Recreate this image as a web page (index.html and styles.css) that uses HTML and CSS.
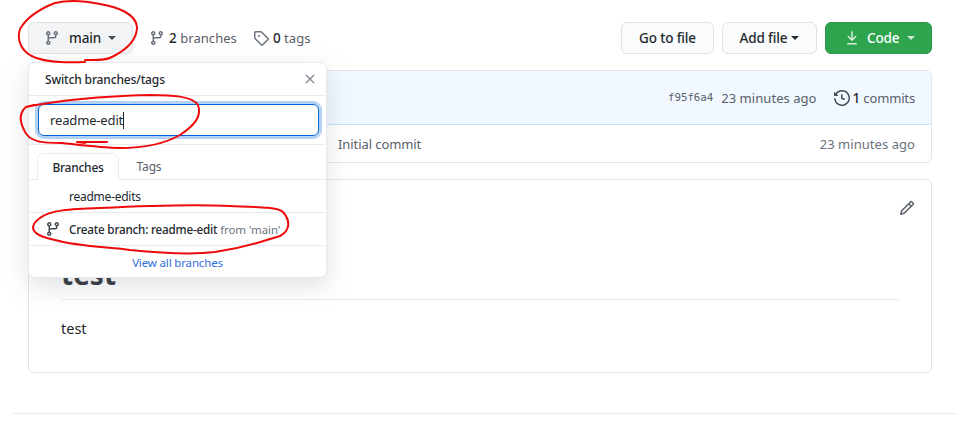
FILE: index.html
```html
<!DOCTYPE html>
<html lang="en">
<head>
<meta charset="utf-8">
<title>Repository</title>
<link rel="stylesheet" href="styles.css">
</head>
<body>
<main class="repo">
  <div class="toolbar">
    <div class="branch-wrap">
      <button class="btn btn-branch">
        <svg class="ico" viewBox="0 0 16 16"><path d="M11.75 2.5a.75.75 0 100 1.5.75.75 0 000-1.5zm-2.25.75a2.25 2.25 0 113 2.122V6A2.5 2.5 0 0110 8.5H6a1 1 0 00-1 1v1.128a2.251 2.251 0 11-1.5 0V5.372a2.25 2.25 0 111.5 0v1.836A2.492 2.492 0 016 7h4a1 1 0 001-1v-.628A2.25 2.25 0 019.5 3.25zM4.25 12a.75.75 0 100 1.5.75.75 0 000-1.5zM3.5 3.25a.75.75 0 111.5 0 .75.75 0 01-1.5 0z"/></svg>
        <span class="btn-label">main</span><span class="caret caret-grey"></span>
      </button>
      <div class="dropdown">
        <div class="dd-head"><span>Switch branches/tags</span>
          <svg class="ico ico-close" viewBox="0 0 16 16"><path d="M3.72 3.72a.75.75 0 011.06 0L8 6.94l3.22-3.22a.75.75 0 111.06 1.06L9.06 8l3.22 3.22a.75.75 0 11-1.06 1.06L8 9.06l-3.22 3.22a.75.75 0 01-1.06-1.06L6.94 8 3.72 4.78a.75.75 0 010-1.06z"/></svg>
        </div>
        <div class="dd-filter"><div class="dd-input"><span>readme-edit</span><i class="cursor"></i></div></div>
        <div class="dd-tabs"><span class="tab tab-active">Branches</span><span class="tab">Tags</span></div>
        <div class="dd-row dd-plain">readme-edits</div>
        <div class="dd-row dd-create">
          <svg class="ico ico-dark" viewBox="0 0 16 16"><path d="M11.75 2.5a.75.75 0 100 1.5.75.75 0 000-1.5zm-2.25.75a2.25 2.25 0 113 2.122V6A2.5 2.5 0 0110 8.5H6a1 1 0 00-1 1v1.128a2.251 2.251 0 11-1.5 0V5.372a2.25 2.25 0 111.5 0v1.836A2.492 2.492 0 016 7h4a1 1 0 001-1v-.628A2.25 2.25 0 019.5 3.25zM4.25 12a.75.75 0 100 1.5.75.75 0 000-1.5zM3.5 3.25a.75.75 0 111.5 0 .75.75 0 01-1.5 0z"/></svg>
          <span class="create-text"><b>Create branch: readme-edit</b> <span class="muted">from 'main'</span></span>
        </div>
        <div class="dd-foot"><a href="#">View all branches</a></div>
      </div>
    </div>
    <a class="stat stat-branches" href="#">
      <svg class="ico" viewBox="0 0 16 16"><path d="M11.75 2.5a.75.75 0 100 1.5.75.75 0 000-1.5zm-2.25.75a2.25 2.25 0 113 2.122V6A2.5 2.5 0 0110 8.5H6a1 1 0 00-1 1v1.128a2.251 2.251 0 11-1.5 0V5.372a2.25 2.25 0 111.5 0v1.836A2.492 2.492 0 016 7h4a1 1 0 001-1v-.628A2.25 2.25 0 019.5 3.25zM4.25 12a.75.75 0 100 1.5.75.75 0 000-1.5zM3.5 3.25a.75.75 0 111.5 0 .75.75 0 01-1.5 0z"/></svg>
      <span><b>2</b> branches</span></a>
    <a class="stat" href="#">
      <svg class="ico" viewBox="0 0 16 16"><path d="M2.5 7.775V2.75a.25.25 0 01.25-.25h5.025a.25.25 0 01.177.073l6.25 6.25a.25.25 0 010 .354l-5.025 5.025a.25.25 0 01-.354 0l-6.25-6.25a.25.25 0 01-.073-.177zm-1.5 0V2.75C1 1.784 1.784 1 2.75 1h5.025c.464 0 .91.184 1.238.513l6.25 6.25a1.75 1.75 0 010 2.474l-5.026 5.026a1.75 1.75 0 01-2.474 0l-6.25-6.25A1.75 1.75 0 011 7.775zM6 5a1 1 0 100 2 1 1 0 000-2z"/></svg>
      <span><b>0</b> tags</span></a>
    <div class="actions">
      <button class="btn btn-file">Go to file</button>
      <button class="btn btn-add">Add file<span class="caret"></span></button>
      <button class="btn btn-code">
        <svg class="ico ico-white" viewBox="0 0 16 16"><path d="M7.47 10.78a.75.75 0 001.06 0l3.75-3.75a.75.75 0 00-1.06-1.06L8.75 8.44V1.75a.75.75 0 00-1.5 0v6.69L4.78 5.97a.75.75 0 00-1.06 1.06l3.75 3.75zM3.75 13a.75.75 0 000 1.5h8.5a.75.75 0 000-1.5h-8.5z"/></svg>
        <span>Code</span><span class="caret caret-white"></span>
      </button>
    </div>
  </div>

  <section class="commits">
    <div class="commit-head">
      <code class="sha">f95f6a4</code>
      <span class="time">23 minutes ago</span>
      <a class="history" href="#">
        <svg class="ico ico-dark" viewBox="0 0 16 16"><path d="M1.643 3.143L.427 1.927A.25.25 0 000 2.104V5.75c0 .138.112.25.25.25h3.646a.25.25 0 00.177-.427L2.715 4.215a6.5 6.5 0 11-1.18 4.458.75.75 0 10-1.493.154 8.001 8.001 0 101.6-5.684zM7.75 4a.75.75 0 01.75.75v2.992l2.028.812a.75.75 0 01-.557 1.392l-2.5-1A.75.75 0 017 8.25v-3.5A.75.75 0 017.75 4z"/></svg>
        <span><b>1</b> commits</span></a>
    </div>
    <div class="commit-row">
      <span class="commit-msg">Initial commit</span>
      <span class="time">23 minutes ago</span>
    </div>
  </section>

  <section class="readme">
    <svg class="ico ico-pencil" viewBox="0 0 16 16"><path d="M11.013 1.427a1.75 1.75 0 012.474 0l1.086 1.086a1.75 1.75 0 010 2.474l-8.61 8.61c-.21.21-.47.364-.756.445l-3.251.93a.75.75 0 01-.927-.928l.929-3.25a1.75 1.75 0 01.445-.758l8.61-8.61zm1.414 1.06a.25.25 0 00-.354 0L10.811 3.75l1.439 1.44 1.263-1.263a.25.25 0 000-.354l-1.086-1.086zM11.189 6.25L9.75 4.81l-6.286 6.287a.25.25 0 00-.064.108l-.558 1.953 1.953-.558a.249.249 0 00.108-.064l6.286-6.286z"/></svg>
    <h1>test</h1>
    <p>test</p>
  </section>
</main>
<div class="foot-rule"></div>

<svg class="scribbles" viewBox="0 0 957 431" fill="none" aria-hidden="true">
  <path d="M85 60C96 60 104 61 112 57C128 49 137 40 137 27C136 14 118 7 100 4C85 1 68 0 55 3C42 8 27 17 20 29C17 38 20 47 27 53C38 62 60 63 85 62"/>
  <path d="M26 107C60 100 110 96 150 95C172 95 192 96 198 105C202 116 195 125 180 135C166 143 145 148 120 148C102 148 80 145 62 143C45 143 29 143 24 130C20 122 19 113 26 107L34 105"/>
  <path d="M85 143L77 142L107 142"/>
  <path d="M40 218C50 210 70 209 100 208C140 206 190 204 230 206C255 207 278 207 283 212C290 220 291 230 280 236C262 241 250 247 215 252C190 255 160 253 130 250C112 247 80 247 55 240C42 237 33 234 33 227C34 222 37 220 40 218"/>
</svg>
</body>
</html>
```

FILE: styles.css
```css
* { box-sizing: border-box; }
html, body { margin: 0; padding: 0; height: 431px; overflow: hidden; background: #fff; }
body { position: relative; font-family: "Noto Sans", "Open Sans", sans-serif; font-size: 13px; color: #24292e; letter-spacing: -0.15px; }
a { color: inherit; text-decoration: none; }
.ico { width: 16px; height: 16px; fill: #6a737d; fill-rule: evenodd; flex: none; display: block; }
.ico-dark { fill: #444d56; }
.ico-white { fill: #fff; opacity: .8; }

.repo { width: 904px; margin-left: 28px; padding-top: 22px; }
.toolbar { display: flex; align-items: center; height: 32px; margin-bottom: 16px; }
.branch-wrap { position: relative; margin-right: 16px; }
.btn { display: inline-flex; align-items: center; height: 32px; border: 1px solid #dfe1e4; border-radius: 6px; background: #fafbfc; font: inherit; font-size: 13.5px; font-weight: 500; letter-spacing: inherit; color: #24292e; padding: 0 15px; }
.btn-branch { width: 105px; background: #f3f4f6; padding-left: 15px; }
.btn-label { margin-left: 9px; }
.caret { display: inline-block; width: 0; height: 0; border: 4px solid transparent; border-top-color: #24292e; border-bottom: 0; margin-left: 4px; }
.caret-grey { border-top-color: #444d56; margin-left: 7px; }
.caret-white { border-top-color: rgba(255,255,255,.75); margin-left: 8px; }

.stat { display: inline-flex; align-items: center; gap: 4px; color: #586069; margin-right: 16px; white-space: pre; letter-spacing: .05px; }
.stat b { color: #24292e; font-weight: 500; font-size: 13.5px; }
.actions { margin-left: auto; display: flex; gap: 8px; }
.btn-file { width: 93px; justify-content: center; padding: 0; }
.btn-add { width: 95px; justify-content: center; padding: 0; }
.btn-code { width: 107px; padding: 0 0 0 18px; background: #2ea44f; border-color: #2a9a4a; color: #fff; }
.btn-code span:first-of-type { margin-left: 7px; }

.dropdown { position: absolute; left: 0; top: 40px; width: 299px; height: 216px; background: #fff; border: 1px solid #e6e8eb; border-radius: 6px; box-shadow: 0 8px 24px rgba(149,157,165,.3); z-index: 5; font-size: 12px; display: flex; flex-direction: column; }
.dd-head { height: 33px; flex: none; display: flex; align-items: center; justify-content: space-between; padding: 0 8px 0 16px; border-bottom: 1px solid #eaecef; font-weight: 500; }
.ico-close { fill: #8b9199; }
.dd-filter { height: 49px; flex: none; padding: 8px 7px 0 9px; border-bottom: 1px solid #eaecef; }
.dd-input { height: 32px; display: flex; align-items: center; padding-left: 11px; border: 1px solid #0366d6; border-radius: 6px; box-shadow: 0 0 0 3px rgba(3,102,214,.3); font-size: 13px; }
.cursor { display: block; width: 1px; height: 17px; background: #24292e; }
.dd-tabs { height: 35px; flex: none; display: flex; align-items: flex-end; padding-left: 8px; border-bottom: 1px solid #eaecef; }
.tab { height: 26px; width: 60px; padding-top: 1px; display: flex; align-items: center; justify-content: center; color: #586069; }
.tab-active { width: 82px; height: 27px; margin-bottom: -1px; background: #fff; border: 1px solid #eaecef; border-bottom: 0; border-radius: 6px 6px 0 0; color: #24292e; font-weight: 500; letter-spacing: -.25px; }
.dd-row { flex: none; display: flex; align-items: center; border-bottom: 1px solid #eaecef; }
.dd-plain { height: 33px; padding-left: 40px; letter-spacing: -.25px; }
.dd-create { height: 33px; padding-left: 16px; gap: 8px; }
.create-text { letter-spacing: -.2px; }
.create-text b { font-weight: 500; font-size: 11.7px; }
.muted { color: #6a737d; font-size: 11.5px; letter-spacing: -.1px; }
.dd-foot { flex: 1; display: flex; align-items: center; justify-content: center; color: #2f6fdc; font-size: 11.5px; padding-top: 1px; }

.commits { border: 1px solid #e1e4e8; border-radius: 6px; height: 93px; overflow: hidden; }
.commit-head { height: 54px; display: flex; align-items: center; justify-content: flex-end; padding-right: 16px; background: #f1f8ff; border: 1px solid #c8e1ff; border-width: 0 0 1px; color: #586069; }
.time { letter-spacing: .05px; }
.sha { font-family: "DejaVu Sans Mono", "Liberation Mono", monospace; font-size: 10.8px; letter-spacing: -.05px; margin-right: 8px; }
.history { display: inline-flex; align-items: center; gap: 3px; margin-left: 17px; white-space: pre; }
.history b { color: #24292e; font-weight: 500; font-size: 13.5px; }
.commit-row { height: 37px; display: flex; align-items: center; justify-content: space-between; padding: 0 16px 0 309px; }
.commit-msg { color: #586069; letter-spacing: -.08px; }
.commit-row .time { color: #6a737d; }

.readme { position: relative; margin-top: 16px; height: 194px; border: 1px solid #e1e4e8; border-radius: 6px; padding: 72px 32px 0; }
.ico-pencil { position: absolute; right: 16px; top: 20px; fill: #586069; }
.readme h1 { margin: 0; height: 48px; font-size: 28px; line-height: 44px; font-weight: 700; border-bottom: 1px solid #eaecef; letter-spacing: 0; }
.readme p { margin: 18px 0 0; font-size: 14.5px; line-height: 20px; letter-spacing: 0; }

.foot-rule { margin: 40px 0 0 12px; height: 1px; background: #eaecef; }
.scribbles { position: absolute; left: 0; top: 0; width: 957px; height: 431px; z-index: 10; pointer-events: none; stroke: #ee0a0a; stroke-width: 2; stroke-linecap: round; stroke-linejoin: round; }
```
